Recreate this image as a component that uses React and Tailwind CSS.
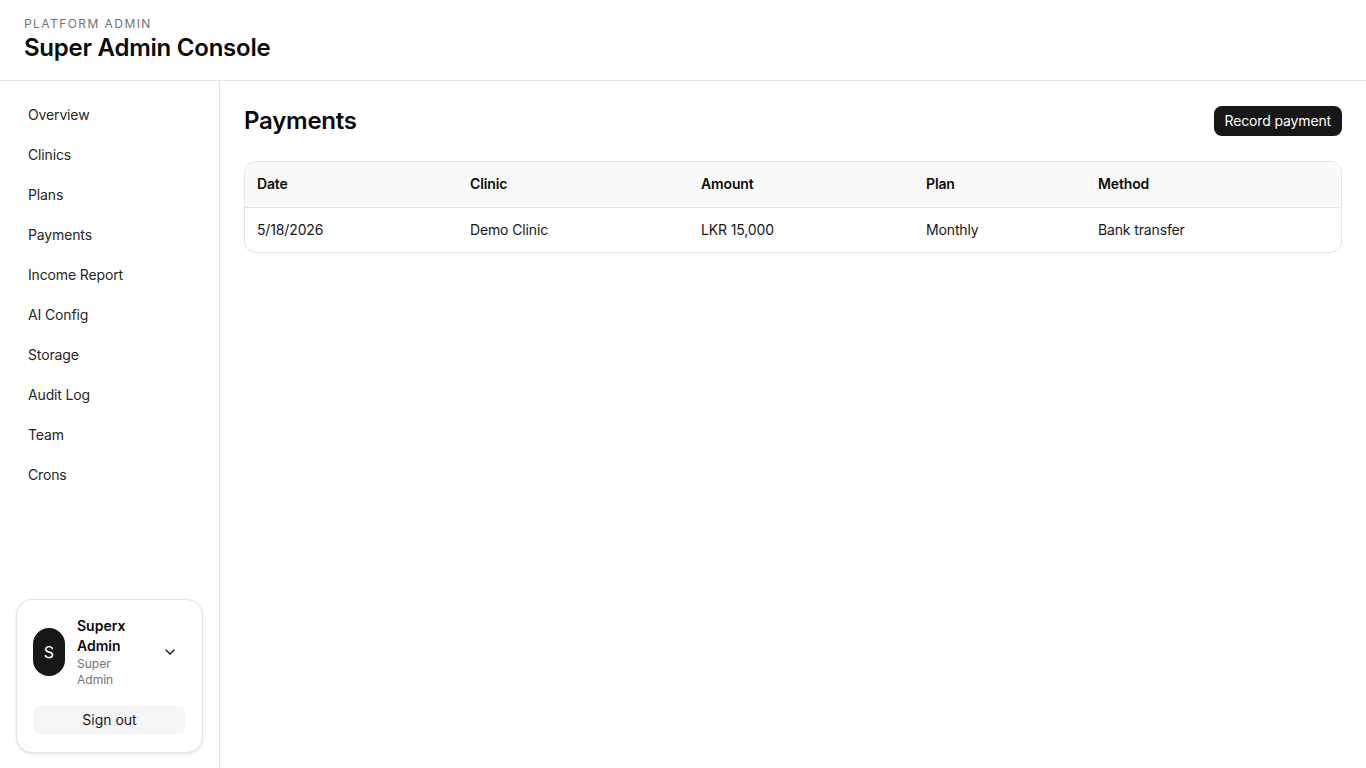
import React from 'react';
import { ChevronDown } from 'lucide-react';

const navItems = [
  'Overview',
  'Clinics',
  'Plans',
  'Payments',
  'Income Report',
  'AI Config',
  'Storage',
  'Audit Log',
  'Team',
  'Crons',
];

const payments = [
  { date: '5/18/2026', clinic: 'Demo Clinic', amount: 'LKR 15,000', plan: 'Monthly', method: 'Bank transfer' },
];

function Sidebar() {
  return (
    <aside className="w-[220px] shrink-0 border-r border-[#e5e5e5] flex flex-col justify-between">
      <nav className="flex flex-col gap-1 px-4 pt-4">
        {navItems.map((item) => (
          <a key={item} href="#" className="px-3 py-2 text-sm text-[#262626] tracking-[-0.01em] rounded-md">
            {item}
          </a>
        ))}
      </nav>

      {/* user card */}
      <div className="mx-4 mb-[15px] rounded-2xl border border-[#e5e5e5] bg-white px-4 pt-4 pb-[18px] shadow-sm">
        <div className="flex items-center gap-3">
          <div className="w-8 h-12 shrink-0 rounded-full bg-[#171717] text-white text-base flex items-center justify-center">
            S
          </div>
          <div className="flex-1 min-w-0 pr-2">
            <p className="text-sm font-semibold text-[#0a0a0a] leading-5">Superx Admin</p>
            <p className="text-xs text-[#737373] leading-4">Super Admin</p>
          </div>
          <ChevronDown className="w-4 h-4 text-[#171717] mr-2" strokeWidth={2} />
        </div>
        <button className="mt-[18px] mx-px w-[calc(100%-2px)] h-7 rounded-md bg-[#f5f5f5] text-sm text-[#171717]">
          Sign out
        </button>
      </div>
    </aside>
  );
}

function PaymentsTable() {
  return (
    <div className="rounded-xl border border-[#e5e5e5] overflow-hidden">
      <table className="w-full text-sm text-left tracking-[-0.01em]">
        <thead className="bg-[#fafafa]">
          <tr className="border-b border-[#e5e5e5]">
            <th className="px-3 h-[45px] font-semibold text-[#0a0a0a]">Date</th>
            <th className="px-3 h-[45px] font-semibold text-[#0a0a0a]">Clinic</th>
            <th className="px-3 h-[45px] font-semibold text-[#0a0a0a]">Amount</th>
            <th className="px-3 h-[45px] font-semibold text-[#0a0a0a]">Plan</th>
            <th className="px-3 h-[45px] font-semibold text-[#0a0a0a]">Method</th>
          </tr>
        </thead>
        <tbody>
          {payments.map((p) => (
            <tr key={p.date + p.clinic}>
              <td className="px-3 h-[45px] w-[213px] text-[#171717]">{p.date}</td>
              <td className="px-3 h-[45px] w-[231px] text-[#171717]">{p.clinic}</td>
              <td className="px-3 h-[45px] w-[225px] text-[#171717]">{p.amount}</td>
              <td className="px-3 h-[45px] w-[172px] text-[#171717]">{p.plan}</td>
              <td className="px-3 h-[45px] text-[#171717]">{p.method}</td>
            </tr>
          ))}
        </tbody>
      </table>
    </div>
  );
}

export default function App() {
  return (
    <div className="min-h-screen h-screen flex flex-col bg-white text-[#0a0a0a]" style={{ fontFamily: 'Inter, "Liberation Sans", sans-serif' }}>
      <header className="h-[81px] shrink-0 border-b border-[#e5e5e5] px-6 pt-4">
        <p className="text-xs tracking-[0.12em] uppercase text-[#737373] leading-4">Platform Admin</p>
        <h1 className="text-2xl font-semibold leading-8 tracking-[-0.01em]">Super Admin Console</h1>
      </header>

      <div className="flex flex-1 min-h-0">
        <Sidebar />

        <main className="flex-1 p-6">
          <div className="flex items-center justify-between mb-6">
            <h2 className="text-2xl font-semibold tracking-[-0.01em]">Payments</h2>
            <button className="h-[30px] px-[11px] rounded-lg bg-[#171717] text-white text-sm tracking-[-0.01em]">
              Record payment
            </button>
          </div>
          <PaymentsTable />
        </main>
      </div>
    </div>
  );
}
